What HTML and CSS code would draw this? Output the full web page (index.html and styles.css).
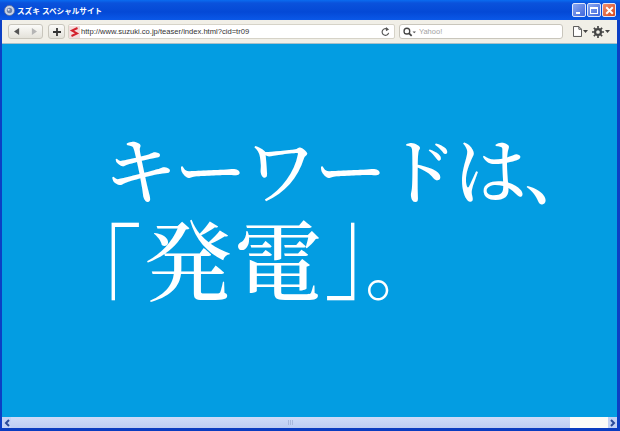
FILE: index.html
```html
<!DOCTYPE html>
<html lang="ja">
<head>
    <meta charset="UTF-8">
    <meta name="viewport" content="width=device-width, initial-scale=1.0">
    <title>スズキ スペシャルサイト</title>
    <link rel="stylesheet" href="styles.css">
</head>
<body>
    <div class="window">
        <div class="titlebar">
            <svg class="app-icon" width="11" height="11" viewBox="0 0 13 13">
                <circle cx="6.5" cy="6.5" r="6" fill="#c9d3e6" stroke="#5b6f9e"/>
                <circle cx="6.5" cy="6.5" r="3.2" fill="#6f83ab"/>
                <circle cx="5.5" cy="5.5" r="1.2" fill="#dfe6f2"/>
            </svg>
            <div class="title-text">スズキ スペシャルサイト</div>
            <div class="win-buttons">
                <div class="win-btn win-min"><span class="min-mark"></span></div>
                <div class="win-btn win-max"><span class="max-mark"></span></div>
                <div class="win-btn win-close">
                    <svg width="9" height="9" viewBox="0 0 11 11"><path d="M1.5 1.5l8 8M9.5 1.5l-8 8" stroke="#fff" stroke-width="2.4"/></svg>
                </div>
            </div>
        </div>

        <div class="toolbar">
            <div class="nav-group">
                <div class="nav-btn">
                    <svg width="6" height="7" viewBox="0 0 7 8"><path d="M6 0v8L0 4z" fill="#555"/></svg>
                </div>
                <div class="nav-btn">
                    <svg width="6" height="7" viewBox="0 0 7 8"><path d="M1 0v8l6-4z" fill="#b5b5b5"/></svg>
                </div>
            </div>
            <div class="add-btn">
                <svg width="8" height="8" viewBox="0 0 9 9"><path d="M4.5 0v9M0 4.500h9" stroke="#333" stroke-width="2"/></svg>
            </div>
            <div class="address">
                <svg class="site-icon" width="11" height="12" viewBox="0 0 11 12">
                    <rect width="11" height="12" fill="#f3dcdc"/>
                    <path d="M8.500 2L3 4.500l5 3L2.500 10" fill="none" stroke="#d3202c" stroke-width="2"/>
                </svg>
                <div class="url">http://www.suzuki.co.jp/teaser/index.html?cid=tr09</div>
                <svg width="9" height="10" viewBox="0 0 10 11">
                    <path d="M8.500 6.500A3.700 3.700 0 1 1 7 2.400" fill="none" stroke="#555" stroke-width="1.300"/>
                    <path d="M5.500 0l3.500 2.700-3.500 2z" fill="#555"/>
                </svg>
            </div>
            <div class="search">
                <svg width="13" height="10" viewBox="0 0 15 11">
                    <circle cx="4.500" cy="4.500" r="3.300" fill="none" stroke="#444" stroke-width="1.500"/>
                    <path d="M7 7l3 3" stroke="#444" stroke-width="2"/>
                    <path d="M11 5h4l-2 2z" fill="#555"/>
                </svg>
                <div class="search-text">Yahoo!</div>
            </div>
            <div class="tool-icons">
                <div class="tool">
                    <svg width="9" height="11" viewBox="0 0 10 12"><path d="M.5.500h6l3 3v8H.5z" fill="#fff" stroke="#444"/><path d="M6.500.500v3h3" fill="none" stroke="#444"/></svg>
                    <svg width="5" height="3" viewBox="0 0 5 3"><path d="M0 0h5L2.500 3z" fill="#444"/></svg>
                </div>
                <div class="tool">
                    <svg width="12" height="12" viewBox="0 0 13 13">
                        <circle cx="6.500" cy="6.500" r="3.200" fill="none" stroke="#444" stroke-width="2.400"/>
                        <path d="M6.500 0v13M0 6.500h13M2 2l9 9M11 2l-9 9" stroke="#444" stroke-width="1.800" stroke-dasharray="2.400 8.200 2.400"/>
                    </svg>
                    <svg width="5" height="3" viewBox="0 0 5 3"><path d="M0 0h5L2.500 3z" fill="#444"/></svg>
                </div>
            </div>
        </div>

        <div class="content">
            <h1 class="headline">
                <div class="line-one">キーワードは、</div>
                <div class="line-two"><span class="open-bracket">「</span><span class="kanji">発電</span><span class="close-bracket">」</span><span class="full-stop">。</span></div>
            </h1>
        </div>

        <div class="scrollbar">
            <div class="arrow">
                <svg width="6" height="8" viewBox="0 0 6 8"><path d="M5 1L2 4l3 3" fill="none" stroke="#2a4a9a" stroke-width="2"/></svg>
            </div>
            <div class="thumb"><span class="grip"></span></div>
            <div class="track"></div>
            <div class="arrow">
                <svg width="6" height="8" viewBox="0 0 6 8"><path d="M1 1l3 3-3 3" fill="none" stroke="#2a4a9a" stroke-width="2"/></svg>
            </div>
        </div>
    </div>
</body>
</html>
```

FILE: styles.css
```css
html, body { margin: 0; padding: 0; }
body { width: 620px; height: 431px; overflow: hidden; font-family: "Liberation Sans", "Noto Sans CJK JP", sans-serif; }
.window { width: 620px; height: 431px; box-sizing: border-box; display: flex; flex-direction: column; background: #0a4fd8; border-left: 2px solid #0c3fc4; border-right: 3px solid #0c3fc4; border-bottom: 3px solid #0a3cc0; }
.titlebar { height: 20px; margin: 0 -3px 0 -2px; padding: 0 4px 0 4px; display: flex; align-items: center; background: linear-gradient(#0a6cf0 0, #0a52dc 3px, #0449d6 12px, #0a58e8 20px); }
.app-icon { flex: none; margin-right: 2px; }
.title-text { flex: 1; color: #fff; font-size: 7.600px; font-weight: bold; white-space: nowrap; }
.win-buttons { display: flex; gap: 1px; }
.win-btn { width: 14px; height: 14px; box-sizing: border-box; border: 1px solid #dfe7fa; border-radius: 2px; display: flex; align-items: center; justify-content: center; background: linear-gradient(135deg, #8aa8f0, #3f66dc); }
.win-close { background: linear-gradient(135deg, #ee9070, #d8481f); }
.min-mark { width: 4px; height: 2px; background: #fff; margin-top: 6px; margin-right: 2px; }
.max-mark { width: 8px; height: 7px; box-sizing: border-box; border: 1px solid #fff; border-top-width: 2px; }
.toolbar { height: 24px; padding: 0 6px; display: flex; align-items: center; background: #f1efe7; border-bottom: 1px solid #a9c0c9; box-sizing: border-box; }
.nav-group { display: flex; width: 35px; height: 15px; margin-right: 5px; box-sizing: border-box; border: 1px solid #c9c6bc; border-radius: 3px; background: linear-gradient(#fbfbf9, #e4e2da); }
.nav-btn { flex: 1; display: flex; align-items: center; justify-content: center; }
.add-btn { width: 17px; height: 15px; margin-right: 3px; box-sizing: border-box; border: 1px solid #c9c6bc; border-radius: 3px; background: linear-gradient(#fbfbf9, #e4e2da); display: flex; align-items: center; justify-content: center; }
.address { width: 327px; height: 15px; box-sizing: border-box; padding: 0 4px 0 0; display: flex; align-items: center; background: #fff; border: 1px solid #d6d3c8; border-radius: 2px; }
.site-icon { flex: none; margin-right: 1px; }
.url { flex: 1; font-size: 7.600px; color: #333; white-space: nowrap; }
.search { width: 164px; height: 15px; margin-left: 4px; box-sizing: border-box; padding-left: 3px; display: flex; align-items: center; gap: 3px; background: #fff; border: 1px solid #c9c6bc; border-radius: 3px; }
.search-text { font-size: 7.500px; color: #a3a3a3; }
.tool-icons { display: flex; gap: 4px; margin-left: 10px; }
.tool { display: flex; align-items: center; gap: 1px; }
.content { flex: 1; background: #039de2; padding: 80px 0 0 102px; }
.headline { margin: 0; color: #fff; font-family: "Noto Serif CJK JP", "Noto Sans CJK JP", serif; font-weight: 500; white-space: nowrap; }
.line-one { font-size: 73px; letter-spacing: -3px; line-height: 86px; }
.line-two { font-size: 88px; line-height: 92px; text-spacing-trim: space-all; }
.open-bracket { display: inline-block; margin-left: -50px; margin-right: 2px; transform: translateY(16.500px) scaleY(1.360); }
.kanji { letter-spacing: 2px; }
.close-bracket { display: inline-block; margin-right: -47px; transform: translateY(-18px) scaleY(1.360); }
.full-stop { font-size: 72px; font-weight: 400; }
.scrollbar { height: 11px; display: flex; align-items: stretch; background: #c3d2f5; }
.arrow { width: 9px; display: flex; align-items: center; justify-content: center; }
.thumb { flex: 1; display: flex; align-items: center; justify-content: center; background: linear-gradient(#cfdcf8, #bccdf3); }
.grip { width: 6px; height: 5px; background: repeating-linear-gradient(90deg, #a8b8dc 0 1px, transparent 1px 2px); }
.track { width: 38px; background: #fbfbf8; }
```
